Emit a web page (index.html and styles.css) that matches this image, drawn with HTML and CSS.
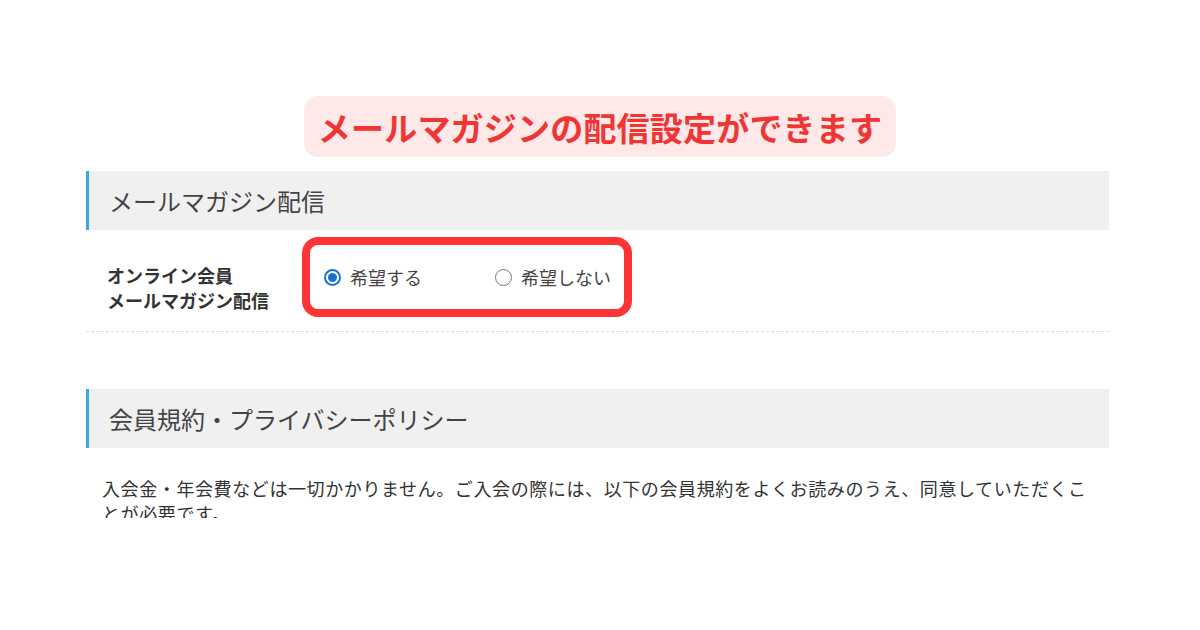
FILE: index.html
```html
<!DOCTYPE html>
<html lang="ja">
<head>
<meta charset="utf-8">
<link rel="stylesheet" href="styles.css">
</head>
<body>
<div class="page">
  <div class="badge-wrap">
    <div class="badge">メールマガジンの配信設定ができます</div>
  </div>
  <div class="panel">
    <div class="sec-head">メールマガジン配信</div>
    <div class="row">
      <div class="label">オンライン会員<br>メールマガジン配信</div>
      <div class="highlight">
        <label class="radio"><span class="dot checked"></span><span class="rtext">希望する</span></label>
        <label class="radio"><span class="dot"></span><span class="rtext">希望しない</span></label>
      </div>
    </div>
    <div class="sec-head sec-head-2">会員規約・プライバシーポリシー</div>
    <p class="note">入会金・年会費などは一切かかりません。ご入会の際には、以下の会員規約をよくお読みのうえ、同意していただくことが必要です。</p>
  </div>
</div>
</body>
</html>
```

FILE: styles.css
```css
html, body {
  margin: 0;
  padding: 0;
  background: #ffffff;
}
body {
  font-family: "Noto Sans CJK JP", "Noto Sans", sans-serif;
  color: #333;
}
.page {
  width: 1200px;
  height: 630px;
  padding-top: 96px;
  box-sizing: border-box;
}
.badge-wrap {
  display: flex;
  justify-content: center;
}
.badge {
  height: 61px;
  padding: 0 14px;
  background: #ffe8e8;
  border-radius: 14px;
  display: flex;
  align-items: center;
  font-size: 33px;
  font-weight: 700;
  color: #f03535;
  letter-spacing: 0.2px;
}
.panel {
  margin: 14px 0 0 86px;
  width: 1023px;
  height: 347px;
  overflow: hidden;
}
.sec-head {
  height: 59px;
  background: #f0f0f0;
  border-left: 3px solid #3aa8e2;
  padding-left: 20px;
  display: flex;
  align-items: center;
  font-size: 24px;
  color: #444;
  box-sizing: border-box;
}
.sec-head-2 {
  margin-top: 57px;
}
.row {
  height: 102px;
  border-bottom: 1px dashed #dcdcdc;
  display: flex;
  align-items: flex-start;
  box-sizing: border-box;
}
.label {
  width: 195px;
  padding-left: 21px;
  padding-top: 33px;
  font-size: 18px;
  line-height: 25px;
  font-weight: 700;
  color: #333;
}
.highlight {
  margin-top: 7px;
  width: 330px;
  height: 80px;
  border: 8px solid #ff3535;
  border-radius: 16px;
  box-sizing: border-box;
  display: flex;
  align-items: center;
  padding-left: 14px;
}
.radio {
  display: flex;
  align-items: center;
  font-size: 18px;
  color: #444;
}
.radio + .radio {
  margin-left: 73px;
}
.dot {
  width: 17px;
  height: 17px;
  border-radius: 50%;
  border: 1.5px solid #777;
  box-sizing: border-box;
  margin-right: 9px;
  position: relative;
  background: #fff;
}
.dot.checked {
  border: 2px solid #1a73d2;
}
.dot.checked::after {
  content: "";
  position: absolute;
  left: 2px;
  top: 2px;
  width: 9px;
  height: 9px;
  border-radius: 50%;
  background: #1a73d2;
}
.rtext {
  line-height: 25px;
}
.note {
  margin: 28px 0 0 0;
  padding: 0 8px 0 16px;
  font-size: 18px;
  line-height: 25px;
  letter-spacing: 0.6px;
  color: #333;
}
```
